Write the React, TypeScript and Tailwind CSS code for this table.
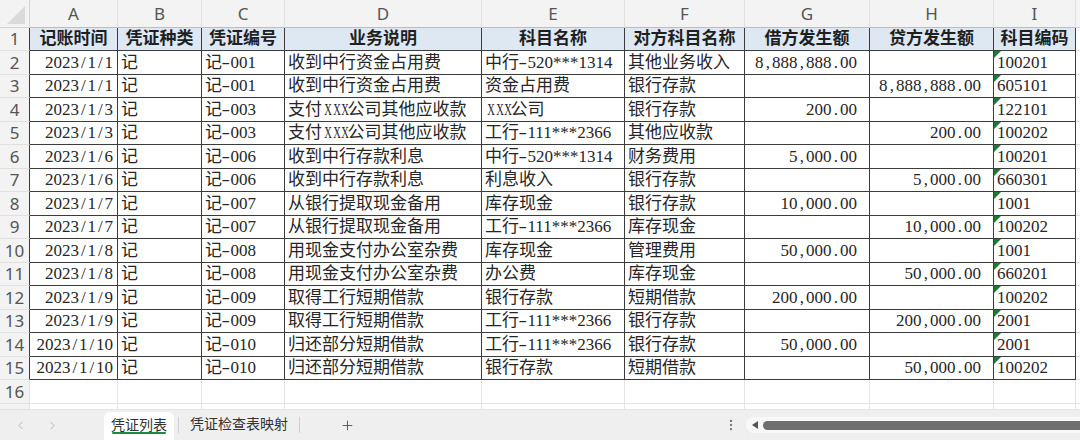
import React from "react";
import { ChevronLeft, ChevronRight, Plus, EllipsisVertical } from "lucide-react";

type Row = [string, string, string, string, string, string, string, string, string];

const rows: Row[] = [
  ["2023/1/1", "记", "记-001", "收到中行资金占用费", "中行-520***1314", "其他业务收入", "8,888,888.00", "", "100201"],
  ["2023/1/1", "记", "记-001", "收到中行资金占用费", "资金占用费", "银行存款", "", "8,888,888.00", "605101"],
  ["2023/1/3", "记", "记-003", "支付XXX公司其他应收款", "XXX公司", "银行存款", "200.00", "", "122101"],
  ["2023/1/3", "记", "记-003", "支付XXX公司其他应收款", "工行-111***2366", "其他应收款", "", "200.00", "100202"],
  ["2023/1/6", "记", "记-006", "收到中行存款利息", "中行-520***1314", "财务费用", "5,000.00", "", "100201"],
  ["2023/1/6", "记", "记-006", "收到中行存款利息", "利息收入", "银行存款", "", "5,000.00", "660301"],
  ["2023/1/7", "记", "记-007", "从银行提取现金备用", "库存现金", "银行存款", "10,000.00", "", "1001"],
  ["2023/1/7", "记", "记-007", "从银行提取现金备用", "工行-111***2366", "库存现金", "", "10,000.00", "100202"],
  ["2023/1/8", "记", "记-008", "用现金支付办公室杂费", "库存现金", "管理费用", "50,000.00", "", "1001"],
  ["2023/1/8", "记", "记-008", "用现金支付办公室杂费", "办公费", "库存现金", "", "50,000.00", "660201"],
  ["2023/1/9", "记", "记-009", "取得工行短期借款", "银行存款", "短期借款", "200,000.00", "", "100202"],
  ["2023/1/9", "记", "记-009", "取得工行短期借款", "工行-111***2366", "银行存款", "", "200,000.00", "2001"],
  ["2023/1/10", "记", "记-010", "归还部分短期借款", "工行-111***2366", "银行存款", "50,000.00", "", "2001"],
  ["2023/1/10", "记", "记-010", "归还部分短期借款", "银行存款", "短期借款", "", "50,000.00", "100202"],
];

const headers = ["记账时间", "凭证种类", "凭证编号", "业务说明", "科目名称", "对方科目名称", "借方发生额", "贷方发生额", "科目编码"];
const letters = ["A", "B", "C", "D", "E", "F", "G", "H", "I"];
const align = ["r", "l", "l", "l", "l", "l", "r", "r", "l"];

function renderText(s: string) {
  const out: React.ReactNode[] = [];
  let buf = "";
  const flush = (k: number) => {
    if (buf) {
      out.push(<span key={"b" + k}>{buf}</span>);
      buf = "";
    }
  };
  for (let i = 0; i < s.length; i++) {
    const c = s[i];
    if (/[0-9]/.test(c) || c.charCodeAt(0) > 127) {
      buf += c;
    } else {
      flush(i);
      if (c === "X") {
        out.push(
          <span key={i} className="inline-block w-[8.5px] text-center">
            <span className="inline-block scale-x-[0.62]">X</span>
          </span>
        );
      } else if (c === "-") {
        out.push(
          <span key={i} className="inline-block w-[8.5px] text-center">
            <span className="inline-block scale-x-150">-</span>
          </span>
        );
      } else {
        out.push(
          <span key={i} className="inline-block w-[8.5px] text-center">
            {c}
          </span>
        );
      }
    }
  }
  flush(s.length);
  return out;
}

const font = "font-['Liberation_Serif','Noto_Sans_CJK_SC',serif]";

export default function App() {
  const cells: React.ReactNode[] = [];

  cells.push(
    <div key="corner" className="bg-[#f3f3f3] border-r border-b border-[#d4d4d4] flex items-end justify-end pr-[4px] pb-[3px]">
      <svg width="18" height="18" viewBox="0 0 18 18">
        <polygon points="18,0 18,18 0,18" fill="#dadada" />
      </svg>
    </div>
  );
  letters.forEach((l) => {
    cells.push(
      <div
        key={"h" + l}
        className="bg-[#f3f3f3] border-r border-b border-r-[#e0e0e0] border-b-[#bdbdbd] flex items-center justify-center text-[17px] text-[#555] font-['Noto_Sans',sans-serif]"
      >
        {l}
      </div>
    );
  });
  cells.push(<div key="hJ" className="bg-[#f3f3f3] border-b border-[#d4d4d4]" />);

  cells.push(
    <div key="r1" className="bg-[#f3f3f3] border-r border-b border-r-[#3c3c3c] border-b-[#e0e0e0] flex items-center justify-center text-[17px] text-[#555] font-['Noto_Sans',sans-serif]">
      1
    </div>
  );
  headers.forEach((h, i) => {
    cells.push(
      <div
        key={"t" + i}
        className={`bg-[#dde8f3] border-r border-b border-[#3c3c3c] flex items-center justify-center text-[17px] font-bold text-[#1f1f1f] whitespace-nowrap overflow-hidden ${font}`}
      >
        {h}
      </div>
    );
  });
  cells.push(<div key="t1J" className="border-b border-[#e1e1e1]" />);

  rows.forEach((r, ri) => {
    cells.push(
      <div
        key={"rn" + ri}
        className="bg-[#f3f3f3] border-r border-b border-r-[#3c3c3c] border-b-[#e0e0e0] flex items-center justify-center text-[17px] text-[#555] font-['Noto_Sans',sans-serif]"
      >
        {ri + 2}
      </div>
    );
    r.forEach((v, ci) => {
      const isRight = align[ci] === "r";
      const pad = ci === 0 ? "pr-[4px]" : isRight ? "pr-[12px]" : "pl-[3px]";
      cells.push(
        <div
          key={"c" + ri + "_" + ci}
          className={`relative border-r border-b border-[#3c3c3c] flex items-center ${isRight ? "justify-end" : "justify-start"} ${pad} text-[17px] text-[#262626] whitespace-nowrap overflow-hidden ${font}`}
        >
          {ci === 8 && (
            <span className="absolute left-0 top-0 w-0 h-0 border-t-[7px] border-r-[7px] border-t-[#1d7a33] border-r-transparent" />
          )}
          {renderText(v)}
        </div>
      );
    });
    cells.push(<div key={"cJ" + ri} className="border-b border-[#e1e1e1]" />);
  });

  [16, 17].forEach((n) => {
    cells.push(
      <div
        key={"rn" + n}
        className="bg-[#f3f3f3] border-r border-b border-[#e0e0e0] flex items-center justify-center text-[17px] text-[#555] font-['Noto_Sans',sans-serif] overflow-hidden"
      >
        {n === 16 ? "16" : ""}
      </div>
    );
    for (let i = 0; i < 9; i++) {
      cells.push(<div key={"e" + n + "_" + i} className="border-r border-b border-[#e4e4e4]" />);
    }
    cells.push(<div key={"eJ" + n} className="border-b border-[#e4e4e4]" />);
  });

  return (
    <div className="w-[1080px] h-[440px] overflow-hidden bg-white flex flex-col">
      <div className="grid grid-cols-[30px_88px_84px_83px_197px_143px_120px_125px_124px_82px_1fr] grid-rows-[28px_23px_24px_23px_24px_23px_24px_23px_24px_23px_24px_23px_24px_23px_24px_23px_24px_6px] h-[410px] overflow-hidden">
        {cells}
      </div>
      <div className="h-[30px] bg-[#efefef] flex items-end font-['Noto_Sans_CJK_SC',sans-serif] text-[14px] text-[#333]">
        <div className="w-[104px] h-[30px] flex items-center pl-[14px] gap-[19px] text-[#a8a8a8]">
          <ChevronLeft size={13} strokeWidth={1.5} />
          <ChevronRight size={13} strokeWidth={1.5} />
        </div>
        <div className="relative w-[70px] h-[28px] bg-white rounded-t-[6px] flex items-center justify-center pb-[3px]">
          凭证列表
          <span className="absolute left-[8px] right-[8px] bottom-[6px] h-[2px] bg-[#1e8a46] rounded-full" />
        </div>
        <div className="h-[30px] flex items-center">
          <div className="ml-[4px] w-px h-[16px] bg-[#cfcfcf]" />
          <div className="px-[11px] pb-[3px]">凭证检查表映射</div>
          <div className="w-px h-[16px] bg-[#cfcfcf]" />
          <div className="ml-[40px] text-[#555]">
            <Plus size={15} strokeWidth={1.5} />
          </div>
        </div>
        <div className="flex-1" />
        <div className="h-[30px] flex items-center">
          <EllipsisVertical size={14} strokeWidth={2} className="text-[#777] mr-[8px]" />
          <div className="w-[334px] h-[16px] bg-[#f8f8f8] rounded-l-full flex items-center pl-[6px]">
            <svg width="7" height="8" viewBox="0 0 7 8">
              <polygon points="0,4 6,0 6,8" fill="#555" />
            </svg>
            <div className="ml-[4px] flex-1 h-[9px] bg-[#6e6e6e] rounded-l-full" />
          </div>
        </div>
      </div>
    </div>
  );
}
